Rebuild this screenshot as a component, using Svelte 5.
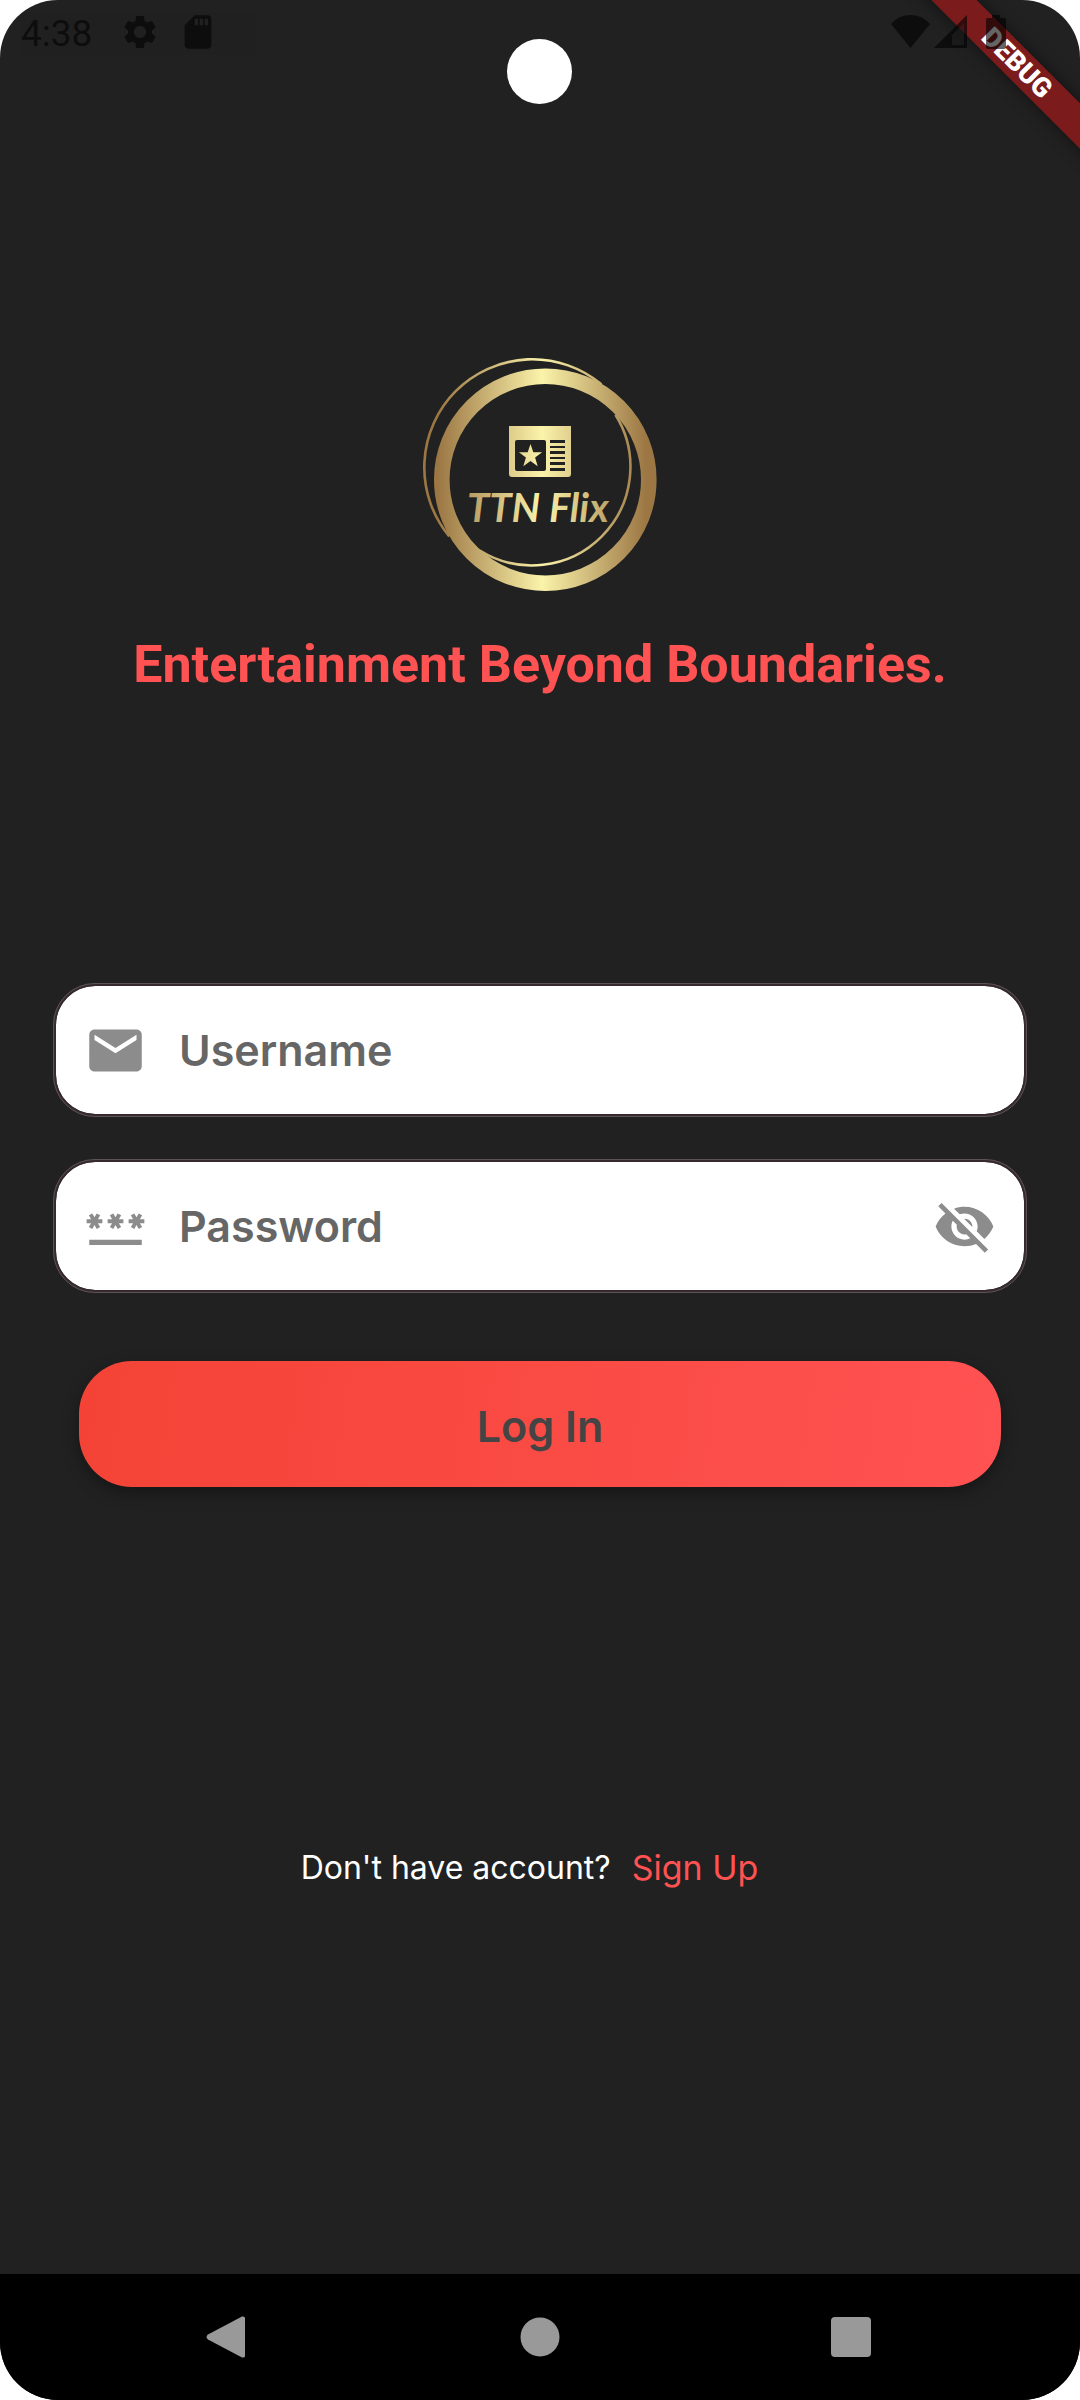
<script>
  let username = $state('');
  let password = $state('');
  let visible = $state(false);
</script>

<div class="phone">
  <header class="status">
    <div class="group">
      <span class="clock">4:38</span>
      <svg class="gear" viewBox="0 0 24 24" aria-hidden="true"><path d="M19.14 12.94c.04-.3.06-.61.06-.94 0-.32-.02-.64-.07-.94l2.03-1.58c.18-.14.23-.41.12-.61l-1.92-3.32c-.12-.22-.37-.29-.59-.22l-2.39.96c-.5-.38-1.03-.7-1.62-.94l-.36-2.54c-.04-.24-.24-.41-.48-.41h-3.84c-.24 0-.43.17-.47.41l-.36 2.54c-.59.24-1.13.57-1.62.94l-2.39-.96c-.22-.08-.47 0-.59.22L2.74 8.87c-.12.21-.08.47.12.61l2.03 1.58c-.05.3-.09.63-.09.94s.02.64.07.94l-2.03 1.58c-.18.14-.23.41-.12.61l1.92 3.32c.12.22.37.29.59.22l2.39-.96c.5.38 1.03.7 1.62.94l.36 2.54c.05.24.24.41.48.41h3.84c.24 0 .44-.17.47-.41l.36-2.54c.59-.24 1.13-.56 1.62-.94l2.39.96c.22.08.47 0 .59-.22l1.92-3.32c.12-.22.07-.47-.12-.61l-2.01-1.58zM12 15.6c-1.98 0-3.6-1.62-3.6-3.6s1.62-3.6 3.6-3.6 3.6 1.62 3.6 3.6-1.62 3.6-3.6 3.6z" /></svg>
      <svg class="card" viewBox="0 0 24 24" aria-hidden="true"><path d="M18 2h-8L4 8v12c0 1.100.9 2 2 2h12c1.100 0 2-.9 2-2V4c0-1.100-.9-2-2-2z" /><path class="slot" d="M10 4h2v4h-2zm3 0h2v4h-2zm3 0h2v4h-2z" /></svg>
    </div>
    <div class="group">
      <svg class="wifi" viewBox="0 0 39 33" aria-hidden="true"><path d="M19.500 33L0 9Q8 0 19.500 0T39 9z" /></svg>
      <svg class="signal" viewBox="0 0 33 33" aria-hidden="true"><path d="M0 33L33 0v33z" /><path class="dim" d="M18 30V20L30 8v22z" /></svg>
      <svg class="battery" viewBox="0 0 20 34" aria-hidden="true"><path d="M6 0h8v3h4a2 2 0 0 1 2 2v27a2 2 0 0 1-2 2H2a2 2 0 0 1-2-2V5a2 2 0 0 1 2-2h4z" /></svg>
    </div>
  </header>
  <span class="camera"></span>
  <div class="corner"><span class="ribbon">DEBUG</span></div>

  <main>
    <svg class="logo" viewBox="0 0 260 260" role="img" aria-label="TTN Flix">
      <defs>
        <linearGradient id="gold" gradientUnits="userSpaceOnUse" x1="28" y1="0" x2="236" y2="0">
          <stop offset="0" stop-color="#9c7744" />
          <stop offset=".5" stop-color="#fbf3aa" />
          <stop offset="1" stop-color="#9c7744" />
        </linearGradient>
      </defs>
      <circle class="line" cx="135.300" cy="134.700" r="103.500" stroke-width="15.600" />
      <path class="line" stroke-width="2.600" d="M39.300 191.400A108 108 0 0 1 191.400 39.300" />
      <path class="line" stroke-width="2.600" d="M205.500 69.800A98.500 98.500 0 0 1 69.800 205.500" />
      <path class="gold" fill-rule="evenodd" d="M99 81h62v48a3 3 0 0 1-3 3h-56a3 3 0 0 1-3-3zM107 95a2 2 0 0 0-2 2v27a2 2 0 0 0 2 2h27a2 2 0 0 0 2-2V97a2 2 0 0 0-2-2zM140 95v3h15v-3zM140 101v2h15v-2zM140 106v3h15v-3zM140 112v2h15v-2zM140 117v3h15v-3zM140 123v3h15v-3z" />
      <path class="gold" d="M120.500 99l2.800 8.300h8.800l-7 5.300 2.600 8.600-7.200-5.200-7.200 5.200 2.600-8.600-7-5.300h8.800z" />
      <text class="gold name" x="57" y="177">TTN Flix</text>
    </svg>
    <h1>Entertainment Beyond Boundaries.</h1>

    <form onsubmit={(e) => e.preventDefault()}>
      <label class="field">
        <svg class="icon" viewBox="0 0 24 24" aria-hidden="true"><path d="M20 4H4c-1.100 0-1.990.9-1.990 2L2 18c0 1.100.9 2 2 2h16c1.100 0 2-.9 2-2V6c0-1.100-.9-2-2-2zm0 4l-8 5-8-5V6l8 5 8-5v2z" /></svg>
        <input type="text" aria-label="Username" placeholder="Username" bind:value={username} />
      </label>
      <div class="field">
        <svg class="icon" viewBox="0 0 24 24" aria-hidden="true"><path d="M2 17h20v2H2v-2zm1.150-4.050L4 11.470l.85 1.480 1.300-.75-.85-1.480H7v-1.500H5.300l.85-1.470L4.850 7 4 8.470 3.150 7l-1.300.75.85 1.470H1v1.500h1.700l-.85 1.480 1.300.75zm6.700-.75l1.300.75.85-1.480.85 1.480 1.300-.75-.85-1.480H15v-1.500h-1.700l.85-1.470-1.300-.75L12 8.470 11.150 7l-1.300.75.85 1.470H9v1.500h1.700l-.85 1.480zM23 9.220h-1.700l.85-1.470-1.300-.75L20 8.470 19.150 7l-1.300.75.85 1.470H17v1.500h1.700l-.85 1.480 1.300.75.85-1.480.85 1.480 1.300-.75-.85-1.480H23v-1.500z" /></svg>
        <input type={visible ? 'text' : 'password'} aria-label="Password" placeholder="Password" value={password} oninput={(e) => (password = e.currentTarget.value)} />
        <button class="eye" type="button" aria-label="Show password" onclick={() => (visible = !visible)}>
          <svg class="icon" viewBox="0 0 24 24" aria-hidden="true"><path d="M12 7c2.760 0 5 2.240 5 5 0 .65-.13 1.260-.36 1.830l2.920 2.920c1.510-1.260 2.700-2.890 3.430-4.750-1.730-4.390-6-7.500-11-7.500-1.400 0-2.740.25-3.980.7l2.160 2.160C10.740 7.130 11.350 7 12 7zM2 4.270l2.280 2.280.46.46C3.080 8.300 1.780 10.020 1 12c1.730 4.390 6 7.500 11 7.500 1.550 0 3.030-.3 4.380-.84l.42.42L19.730 22 21 20.730 3.270 3 2 4.270zM7.530 9.800l1.550 1.550c-.05.21-.08.43-.08.65 0 1.660 1.340 3 3 3 .22 0 .44-.03.65-.08l1.550 1.550c-.67.33-1.410.53-2.200.53-2.760 0-5-2.240-5-5 0-.79.2-1.530.53-2.200zm4.310-.78l3.150 3.150.02-.16c0-1.660-1.340-3-3-3l-.17.01z" /></svg>
        </button>
      </div>
      <button class="login" type="submit">Log In</button>
    </form>

    <p class="signup">Don't have account?<a href="#signup">Sign Up</a></p>
  </main>

  <nav>
    <button type="button" aria-label="Back"><svg viewBox="0 0 42 42" aria-hidden="true"><path d="M0 18.500L34 .5Q37 0 37 2v38q0 2-3 1.500L0 23.500q-3-2.500 0-5z" /></svg></button>
    <button type="button" aria-label="Home"><svg viewBox="0 0 42 42" aria-hidden="true"><circle cx="21" cy="21" r="19.500" /></svg></button>
    <button type="button" aria-label="Recents"><svg viewBox="0 0 42 42" aria-hidden="true"><rect x="1" y="1" width="40" height="40" rx="4" /></svg></button>
  </nav>
</div>

<style>
  :global(body) {
    margin: 0;
    background: #fff;
  }
  .phone {
    position: relative;
    display: flex;
    flex-direction: column;
    min-height: 100vh;
    overflow: hidden;
    border-radius: 58px;
    background: #212121;
    font-family: Inter, sans-serif;
  }
  svg {
    display: block;
    flex: none;
    overflow: visible;
  }
  .status {
    position: relative;
    z-index: 2;
    display: flex;
    justify-content: space-between;
    align-items: center;
    height: 63px;
    padding: 0 74px 0 21px;
    opacity: 0.6;
  }
  .group {
    display: flex;
    align-items: center;
  }
  .clock {
    margin-right: 28px;
    padding-top: 4px;
    font: 37px/44px Roboto, sans-serif;
    color: #000;
  }
  .gear,
  .card {
    width: 40px;
    height: 40px;
  }
  .card {
    margin-left: 18px;
  }
  .slot {
    fill: #212121;
  }
  .wifi {
    width: 39px;
    height: 33px;
  }
  .signal {
    width: 33px;
    height: 33px;
    margin: 0 19px 0 4px;
  }
  .dim {
    fill: #212121;
    opacity: 0.7;
  }
  .battery {
    width: 20px;
    height: 34px;
  }
  .camera {
    position: absolute;
    top: 39px;
    left: 50%;
    width: 65px;
    height: 65px;
    margin-left: -33px;
    border-radius: 50%;
    background: #fff;
  }
  .corner {
    position: absolute;
    top: 0;
    right: 0;
    width: 200px;
    height: 200px;
    overflow: hidden;
  }
  .ribbon {
    position: absolute;
    top: 47px;
    right: -87px;
    width: 300px;
    background: #7b1b1c;
    box-shadow: 0 0 16px rgba(0, 0, 0, 0.5);
    color: #fff;
    font: 900 27px/32px Roboto, sans-serif;
    text-align: center;
    transform: rotate(45deg);
  }
  main {
    display: flex;
    flex: 1;
    flex-direction: column;
    align-items: center;
    padding: 282px 53px 40px;
  }
  .logo {
    width: 260px;
    height: 260px;
  }
  .gold {
    fill: url(#gold);
  }
  .line {
    fill: none;
    stroke: url(#gold);
  }
  .name {
    font: italic bold 40px Lato, sans-serif;
  }
  h1 {
    margin: 29px 0 0;
    color: #ff5252;
    font: bold 52px/62px Roboto, sans-serif;
    text-align: center;
  }
  form {
    display: flex;
    flex-direction: column;
    gap: 42px;
    width: 100%;
    margin-top: 287px;
  }
  .field {
    display: flex;
    align-items: center;
    box-sizing: border-box;
    height: 134px;
    padding: 0 28px;
    border: 3px solid #362a2d;
    border-radius: 42px;
    outline: 1px solid #5c5356;
    outline-offset: -1px;
    background: #fff;
    background-clip: padding-box;
  }
  .icon {
    width: 63px;
    height: 63px;
    fill: #8c8c8c;
  }
  input {
    flex: 1;
    min-width: 0;
    margin-left: 32px;
    padding: 0;
    border: 0;
    outline: 0;
    background: none;
    color: #333;
    font: 600 43px/52px Inter, sans-serif;
  }
  input::placeholder {
    color: #666;
    opacity: 1;
  }
  button {
    padding: 0;
    border: 0;
    background: none;
    cursor: pointer;
  }
  .login {
    height: 126px;
    margin: 26px 26px 0;
    padding-top: 4px;
    border-radius: 53px;
    background: linear-gradient(98deg, #f44336, #ff5252);
    box-shadow: 0 6px 16px rgba(0, 0, 0, 0.35);
    color: #444;
    font: 600 43px/52px Inter, sans-serif;
  }
  .signup {
    display: flex;
    align-items: center;
    margin: 355px 0 0;
    color: #fff;
    font-size: 32px;
    line-height: 52px;
  }
  a {
    padding: 0 21px;
    color: #ff5252;
    font-size: 34px;
    text-decoration: none;
  }
  nav {
    display: flex;
    justify-content: center;
    align-items: center;
    gap: 269px;
    height: 126px;
    background: #000;
  }
  nav svg {
    width: 42px;
    height: 42px;
    fill: #999;
  }
</style>
